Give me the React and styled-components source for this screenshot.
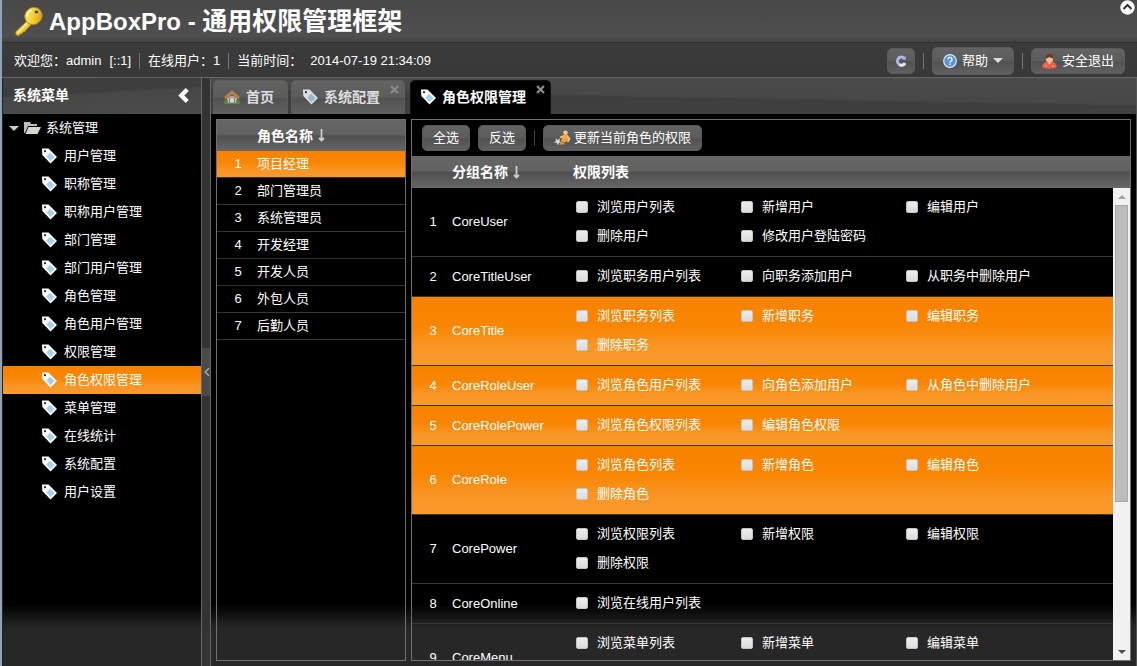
import React, { useState } from "react";
import styled, { createGlobalStyle, css } from "styled-components";

const GlobalStyle = createGlobalStyle`
  *, *::before, *::after { box-sizing: border-box; }
  html, body, #root { height: 100%; margin: 0; }
  body {
    background: #000;
    color: #fff;
    font: 13px/16px "Liberation Sans", "Noto Sans CJK SC", sans-serif;
    overflow: hidden;
  }
  button, input { font: inherit; color: inherit; margin: 0; }
`;

const glossy = css`
  background: linear-gradient(#636363 0%, #5c5c5c 48%, #515151 54%, #616161 100%);
`;
const orange = css`
  background: linear-gradient(#f88200 0%, #f98603 42%, #f99524 70%, #f99a2e 100%);
`;
const fade = css`
  background: linear-gradient(to top, #272727 0, #272727 38px, #000 62px);
`;

const Page = styled.div`
  display: flex;
  flex-direction: column;
  height: 100vh;
  border-left: 2px solid #8ea4b8;
  background: #333;
`;

const TitleBar = styled.header`
  display: flex;
  justify-content: space-between;
  height: 42px;
  padding: 0 2px 0 12px;
  background: linear-gradient(#484848, #4f4f4f 85%, #434343);
`;
const Brand = styled.h1`
  display: flex;
  align-items: center;
  gap: 4px;
  margin: 0;
  font-size: 24px;
  line-height: 40px;
  white-space: pre;
`;
const BrandName = styled.span`
  font-size: 25px;
`;
const RoundButton = styled.button`
  width: 15px;
  height: 15px;
  padding: 0;
  border: 0;
  background: none;
  line-height: 0;
`;

const StatusBar = styled.div`
  display: flex;
  align-items: center;
  height: 36px;
  padding: 1px 12px 0;
  border-top: 1px solid #303030;
  border-bottom: 1px solid #666;
  background: linear-gradient(#3b3b3b, #383838);
  white-space: nowrap;
`;
const StatusItem = styled.div`
  display: flex;
  gap: 8px;
`;
const Spacer = styled.div`
  flex: 1;
`;
const Divider = styled.span`
  width: 1px;
  height: 16px;
  margin: 0 ${(p) => p.$gap}px;
  background: ${(p) => (p.$dark ? "#444" : "#777")};
`;

const Button = styled.button`
  display: inline-flex;
  align-items: center;
  justify-content: center;
  gap: ${(p) => p.$gap || 4}px;
  height: ${(p) => p.$height || 26}px;
  padding: 0 ${(p) => p.$pad || 10}px;
  border: 1px solid #5a5a5a;
  border-radius: 5px;
  white-space: nowrap;
  ${glossy}
`;

const Body = styled.div`
  display: flex;
  flex: 1;
  min-height: 0;
`;

const Sidebar = styled.nav`
  width: 200px;
  border-right: 1px solid #666;
  border-left: 1px solid #222;
  ${fade}
`;
const SidebarHeader = styled.div`
  display: flex;
  align-items: center;
  justify-content: space-between;
  height: 36px;
  padding: 0 12px 2px 10px;
  background: linear-gradient(177deg, #3f3f3f 0%, #3e3e3e 40%, #474747 44%, #4c4c4c 100%);
  font-size: 14px;
  font-weight: bold;
`;
const PlainButton = styled.button`
  display: flex;
  padding: 0;
  border: 0;
  background: none;
`;
const Tree = styled.ul`
  margin: 0;
  padding: 0;
  list-style: none;
`;
const RootNode = styled.div`
  display: flex;
  align-items: center;
  gap: 5px;
  height: 28px;
  padding-left: 6px;
`;
const MenuLink = styled.a`
  display: flex;
  align-items: center;
  gap: 7px;
  height: 28px;
  padding-left: 38px;
  color: #fff;
  text-decoration: none;
  ${(p) => p.$active && orange}
`;

const Splitter = styled.div`
  display: flex;
  flex-direction: column;
  width: 8px;
  background: #333;
`;
const SplitHandle = styled.button`
  display: flex;
  align-items: center;
  justify-content: center;
  width: 8px;
  height: 48px;
  margin-top: 270px;
  padding: 0;
  border: 0;
  background: #4a4a4a;
`;

const Main = styled.main`
  display: flex;
  flex: 1;
  flex-direction: column;
  min-width: 0;
  border-right: 1px solid #555;
  border-left: 1px solid #666;
`;
const TabStrip = styled.div`
  display: flex;
  align-items: flex-end;
  height: 36px;
  padding-left: 2px;
  gap: 3px;
  background: linear-gradient(1deg, #404040 0%, #3e3e3e 46%, #474747 50%, #4c4c4c 100%);
`;
const Tab = styled.div`
  display: flex;
  align-items: flex-start;
  height: 34px;
  margin-left: ${(p) => (p.$active ? 2 : 0)}px;
  padding: 0 5px 0 ${(p) => (p.$active ? 9 : 10)}px;
  border: 1px solid #5c5c5c;
  border-bottom: 0;
  border-radius: 5px 5px 0 0;
  ${(p) => (p.$active ? "background: #000; border-color: #111;" : glossy)}
`;
const TabLabel = styled.button`
  display: flex;
  align-items: center;
  gap: 6px;
  height: 31px;
  padding: 0 ${(p) => (p.$closable ? 10 : 8)}px 0 0;
  border: 0;
  background: none;
  font-size: 14px;
  font-weight: bold;
  opacity: ${(p) => (p.$active ? 1 : 0.8)};
`;
const CloseButton = styled(PlainButton)`
  padding-top: 4px;
`;

const Panels = styled.div`
  display: flex;
  flex: 1;
  gap: 5px;
  min-height: 0;
  padding: 5px;
  ${fade}
`;
const Panel = styled.section`
  display: flex;
  flex: ${(p) => (p.$fixed ? "none" : 1)};
  flex-direction: column;
  width: ${(p) => (p.$fixed ? `${p.$fixed}px` : "auto")};
  min-width: 0;
  border: 1px solid #707070;
`;
const Toolbar = styled.div`
  display: flex;
  align-items: center;
  height: 36px;
  padding: 0 10px;
  gap: 8px;
  background: #000;
`;
const Table = styled.table`
  width: 100%;
  border-collapse: separate;
  border-spacing: 0;
  table-layout: fixed;
  text-align: left;
`;
const HeadCell = styled.th`
  height: ${(p) => p.$height || 32}px;
  padding: 0;
  font-size: 14px;
  font-weight: bold;
`;
const HeadRow = styled.tr`
  background: linear-gradient(#666 0%, #626262 45%, #505050 52%, #666 100%);
`;
const SortLabel = styled.span`
  display: flex;
  align-items: center;
  gap: 4px;
`;
const Row = styled.tr`
  ${(p) => p.$active && orange}
`;
const Cell = styled.td`
  height: 27px;
  padding: 0;
  border-bottom: 1px solid #363636;
`;
const NumberCell = styled(Cell)`
  padding-left: 2px;
  text-align: center;
`;
const PowerCell = styled(Cell)`
  padding: 4px 0 6px 3px;
`;

const Scroller = styled.div`
  display: flex;
  flex: 1;
  min-height: 0;
`;
const Viewport = styled.div`
  flex: 1;
  min-width: 0;
  overflow: hidden;
`;
const ScrollTrack = styled.div`
  display: flex;
  flex-direction: column;
  align-items: center;
  width: 17px;
  background: #f1f1f1;
`;
const ScrollArrow = styled.button`
  display: flex;
  align-items: center;
  justify-content: center;
  width: 17px;
  height: 17px;
  padding: 0;
  border: 0;
  background: #f1f1f1;
`;
const ScrollThumb = styled.div`
  width: 13px;
  height: 63%;
  background: #bcbcbc;
  border: 1px solid #a8a8a8;
`;
const ScrollRest = styled.div`
  flex: 1;
`;

const Checks = styled.div`
  display: grid;
  grid-template-columns: repeat(3, 165px);
  grid-auto-rows: 29px;
`;
const CheckLabel = styled.label`
  display: flex;
  align-items: center;
  gap: 9px;
  white-space: nowrap;
`;
const CheckBox = styled.input`
  appearance: none;
  width: 12px;
  height: 12px;
  border: 1px solid #c4c4c4;
  border-radius: 2px;
  background: linear-gradient(#ededed, #dcdcdc);
`;

const KeyIcon = () => (
  <svg width="31" height="32" viewBox="0 0 31 32" aria-hidden="true">
    <defs>
      <linearGradient id="gold" x1="0" y1="0" x2="1" y2="1">
        <stop offset="0" stopColor="#fff08a" />
        <stop offset="0.5" stopColor="#f5cf2c" />
        <stop offset="1" stopColor="#c98f0e" />
      </linearGradient>
    </defs>
    <path d="M14 15l4 4-6 6-1 2-2 0-1 2-2 0-1 2-3-1-.500-3z" fill="url(#gold)" stroke="#a87512" strokeWidth="0.8" />
    <path d="M14 17L4 28" stroke="#fff3b0" strokeWidth="1.2" />
    <ellipse cx="19.500" cy="11" rx="9" ry="8.500" fill="url(#gold)" stroke="#a87512" strokeWidth="0.8" transform="rotate(-40 19.500 11)" />
    <ellipse cx="22.500" cy="7" rx="2.500" ry="2" fill="#5a4716" stroke="#fff3b0" strokeWidth="0.6" />
    <path d="M13 12c0-4 2-6 5-7" fill="none" stroke="#fff9c9" strokeWidth="1.600" />
  </svg>
);
const TagIcon = () => (
  <svg width="16" height="16" viewBox="0 0 16 16" aria-hidden="true">
    <path d="M1 .500L7.500 .500 16 9 9.500 15.500 1.300 7z" fill="#fff" />
    <path d="M9 4.500l4.500 4.500-4 4.200L5.500 8.500z" fill="#a3cff0" />
    <circle cx="4" cy="3.200" r="1.100" fill="#222" />
  </svg>
);
const HomeIcon = () => (
  <svg width="16" height="16" viewBox="0 0 16 16" aria-hidden="true">
    <path d="M0 13h16v2H0z" fill="#5c9a45" />
    <path d="M3 7h10v7H3z" fill="#e3cfae" />
    <path d="M8 1l8 7-1.500 2.500L8 5.500 1.500 10.500 0 8z" fill="#c98d4e" stroke="#83572e" strokeWidth="0.5" />
    <path d="M5.500 14v-4a2.500 2 0 015 0v4z" fill="#f4f4f4" stroke="#777" strokeWidth="0.8" />
    <circle cx="2" cy="12.500" r="2" fill="#4f9440" />
    <circle cx="14" cy="12.500" r="2" fill="#4f9440" />
  </svg>
);
const FolderIcon = () => (
  <svg width="17" height="14" viewBox="0 0 17 14" aria-hidden="true">
    <path d="M0 1h6l1 2h6v2H4L1 12H0z" fill="#bdbdbd" />
    <path d="M4.500 6H17l-3.500 7H1.500z" fill="#d6d6d6" />
  </svg>
);
const Caret = ({ width = 10, height = 5, up, color = "#ddd" }) => (
  <svg width={width} height={height} viewBox="0 0 10 5" aria-hidden="true">
    <path d={up ? "M0 5h10L5 0z" : "M0 0h10L5 5z"} fill={color} />
  </svg>
);
const Chevron = ({ width, height, color, stroke }) => (
  <svg width={width} height={height} viewBox="0 0 10 14" aria-hidden="true">
    <path d="M8.500 1.500L3 7l5.500 5.500" fill="none" stroke={color} strokeWidth={stroke} />
  </svg>
);
const CloseIcon = () => (
  <svg width="9" height="9" viewBox="0 0 9 9" aria-hidden="true">
    <path d="M1 1l7 7M8 1L1 8" stroke="#8c8c8c" strokeWidth="2.200" />
  </svg>
);
const CollapseIcon = () => (
  <svg width="15" height="15" viewBox="0 0 15 15" aria-hidden="true">
    <circle cx="7.500" cy="7.500" r="7.200" fill="#fff" />
    <path d="M3.500 9l4-4 4 4" fill="none" stroke="#333" strokeWidth="2" />
  </svg>
);
const RefreshIcon = () => (
  <svg width="14" height="14" viewBox="0 0 14 14" aria-hidden="true">
    <path d="M10.500 4.500A4 4 0 107 11" fill="none" stroke="#a9bbea" strokeWidth="3" />
    <path d="M5.500 10.800A4 4 0 0011 9" fill="none" stroke="#e8e8ee" strokeWidth="3" />
    <path d="M8.500 5.500L12 2v4z" fill="#8fa6e0" />
  </svg>
);
const HelpIcon = () => (
  <svg width="14" height="14" viewBox="0 0 14 14" aria-hidden="true">
    <circle cx="7" cy="7" r="6.300" fill="#5a93d2" stroke="#d5e6f7" strokeWidth="1.200" />
    <path d="M5 5.500a2 2 0 113 1.600c-.700.400-1 .700-1 1.400M7 9.500v1.300" fill="none" stroke="#fff" strokeWidth="1.400" />
  </svg>
);
const UserIcon = () => (
  <svg width="15" height="16" viewBox="0 0 15 16" aria-hidden="true">
    <path d="M.500 14.500c-.500-3 1-4.500 3.500-5.500h7c2.500 1 4 2.500 3.500 5.500-3 1.500-11 1.500-14 0z" fill="#ee5c46" />
    <circle cx="7.500" cy="6" r="3.600" fill="#f2bd8c" />
    <path d="M3.500 5.500C3.500 2.500 5 .800 7.500.800S11.500 2.500 11.500 5.500c-2-.200-3-.600-4-1.500C6.500 4.900 5 5.500 3.500 5.500z" fill="#6e3d1c" />
    <path d="M5.500 9.500l2 2 2-2z" fill="#fbd9cf" />
    <path d="M3 12.500l2 .800M12 12.500l-2 .800" stroke="#ffb3a5" strokeWidth="1" />
  </svg>
);
const UpdateIcon = () => (
  <svg width="17" height="16" viewBox="0 0 17 16" aria-hidden="true">
    <circle cx="11.500" cy="2.800" r="2.300" fill="#f5c684" />
    <path d="M9 5l4 0 1.500 4-3.500 3.500-4-1.500z" fill="#f0a63e" />
    <path d="M10 6L6 7.500M13 5.500l2.500 3.500-2 3" fill="none" stroke="#f7c27c" strokeWidth="1.800" />
    <path d="M9 11l-2 2.500h3.500" fill="none" stroke="#e0902a" strokeWidth="1.800" />
    <path d="M1.500 8l2.200 2 2.300-1.500-.500 2.700 2 1.300-2.500.300-1 2.400-1.200-2.400L0 12.500l2-1.500z" fill="#d6dde6" />
  </svg>
);
const SortIcon = () => (
  <svg width="9" height="13" viewBox="0 0 9 13" aria-hidden="true">
    <path d="M4.500 0v10M2 9L4.500 11.500 7 9" fill="none" stroke="#ccc" strokeWidth="1.800" />
  </svg>
);

const menu = ["用户管理", "职称管理", "职称用户管理", "部门管理", "部门用户管理", "角色管理", "角色用户管理", "权限管理", "角色权限管理", "菜单管理", "在线统计", "系统配置", "用户设置"];
const roles = ["项目经理", "部门管理员", "系统管理员", "开发经理", "开发人员", "外包人员", "后勤人员"];
const groups = [
  { name: "CoreUser", powers: ["浏览用户列表", "新增用户", "编辑用户", "删除用户", "修改用户登陆密码"] },
  { name: "CoreTitleUser", powers: ["浏览职务用户列表", "向职务添加用户", "从职务中删除用户"] },
  { name: "CoreTitle", active: true, powers: ["浏览职务列表", "新增职务", "编辑职务", "删除职务"] },
  { name: "CoreRoleUser", active: true, powers: ["浏览角色用户列表", "向角色添加用户", "从角色中删除用户"] },
  { name: "CoreRolePower", active: true, powers: ["浏览角色权限列表", "编辑角色权限"] },
  { name: "CoreRole", active: true, powers: ["浏览角色列表", "新增角色", "编辑角色", "删除角色"] },
  { name: "CorePower", powers: ["浏览权限列表", "新增权限", "编辑权限", "删除权限"] },
  { name: "CoreOnline", powers: ["浏览在线用户列表"] },
  { name: "CoreMenu", powers: ["浏览菜单列表", "新增菜单", "编辑菜单", "删除菜单"] },
];

const GroupColumns = () => (
  <colgroup>
    <col width="40" />
    <col width="121" />
    <col />
  </colgroup>
);

export default function App() {
  const [role, setRole] = useState(0);
  return (
    <>
      <GlobalStyle />
      <Page>
        <TitleBar>
          <Brand>
            <KeyIcon />
            <span>AppBoxPro - <BrandName>通用权限管理框架</BrandName></span>
          </Brand>
          <RoundButton aria-label="收起"><CollapseIcon /></RoundButton>
        </TitleBar>
        <StatusBar>
          <StatusItem><span>欢迎您：admin</span><span>[::1]</span></StatusItem>
          <Divider $gap={8} />
          <StatusItem>在线用户：1</StatusItem>
          <Divider $gap={8} />
          <StatusItem><span>当前时间：</span><time>2014-07-19 21:34:09</time></StatusItem>
          <Spacer />
          <Button aria-label="刷新" $pad={6}><RefreshIcon /></Button>
          <Divider $gap={8} />
          <Button $height={28} $gap={5}><HelpIcon />帮助<Caret /></Button>
          <Divider $gap={8} />
          <Button $gap={5}><UserIcon />安全退出</Button>
        </StatusBar>
        <Body>
          <Sidebar>
            <SidebarHeader>
              系统菜单
              <PlainButton aria-label="折叠菜单"><Chevron width={11} height={15} color="#fff" stroke={4} /></PlainButton>
            </SidebarHeader>
            <Tree>
              <li>
                <RootNode><Caret color="#ccc" /><FolderIcon />系统管理</RootNode>
                <Tree>
                  {menu.map((m) => (
                    <li key={m}>
                      <MenuLink href="#" $active={m === "角色权限管理"}><TagIcon />{m}</MenuLink>
                    </li>
                  ))}
                </Tree>
              </li>
            </Tree>
          </Sidebar>
          <Splitter>
            <SplitHandle aria-label="折叠"><Chevron width={7} height={12} color="#aaa" stroke={2} /></SplitHandle>
          </Splitter>
          <Main>
            <TabStrip>
              <Tab><TabLabel><HomeIcon />首页</TabLabel></Tab>
              <Tab>
                <TabLabel $closable><TagIcon />系统配置</TabLabel>
                <CloseButton aria-label="关闭"><CloseIcon /></CloseButton>
              </Tab>
              <Tab $active>
                <TabLabel $closable $active><TagIcon />角色权限管理</TabLabel>
                <CloseButton aria-label="关闭"><CloseIcon /></CloseButton>
              </Tab>
            </TabStrip>
            <Panels>
              <Panel $fixed={190}>
                <Table>
                  <colgroup>
                    <col width="40" />
                    <col />
                  </colgroup>
                  <thead>
                    <HeadRow>
                      <HeadCell $height={31} />
                      <HeadCell $height={31}><SortLabel>角色名称<SortIcon /></SortLabel></HeadCell>
                    </HeadRow>
                  </thead>
                  <tbody>
                    {roles.map((r, i) => (
                      <Row key={r} $active={i === role} onClick={() => setRole(i)}>
                        <NumberCell>{i + 1}</NumberCell>
                        <Cell>{r}</Cell>
                      </Row>
                    ))}
                  </tbody>
                </Table>
              </Panel>
              <Panel>
                <Toolbar>
                  <Button>全选</Button>
                  <Button>反选</Button>
                  <Divider $gap={0} $dark />
                  <Button $gap={3}><UpdateIcon />更新当前角色的权限</Button>
                </Toolbar>
                <Table>
                  <GroupColumns />
                  <thead>
                    <HeadRow>
                      <HeadCell />
                      <HeadCell><SortLabel>分组名称<SortIcon /></SortLabel></HeadCell>
                      <HeadCell>权限列表</HeadCell>
                    </HeadRow>
                  </thead>
                </Table>
                <Scroller>
                  <Viewport>
                    <Table>
                      <GroupColumns />
                      <tbody>
                        {groups.map((g, i) => (
                          <Row key={g.name} $active={g.active}>
                            <NumberCell>{i + 1}</NumberCell>
                            <Cell>{g.name}</Cell>
                            <PowerCell>
                              <Checks>
                                {g.powers.map((p) => (
                                  <CheckLabel key={p}><CheckBox type="checkbox" />{p}</CheckLabel>
                                ))}
                              </Checks>
                            </PowerCell>
                          </Row>
                        ))}
                      </tbody>
                    </Table>
                  </Viewport>
                  <ScrollTrack>
                    <ScrollArrow aria-label="向上"><Caret width={8} height={4} up color="#a5a5a5" /></ScrollArrow>
                    <ScrollThumb />
                    <ScrollRest />
                    <ScrollArrow aria-label="向下"><Caret width={8} height={4} color="#505050" /></ScrollArrow>
                  </ScrollTrack>
                </Scroller>
              </Panel>
            </Panels>
          </Main>
        </Body>
      </Page>
    </>
  );
}
